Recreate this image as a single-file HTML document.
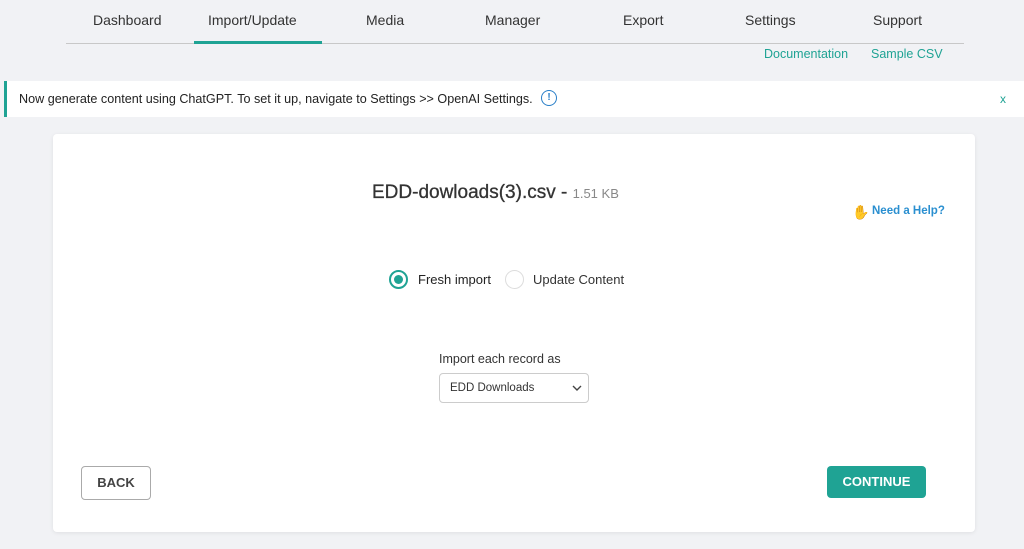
<!DOCTYPE html>
<html><head><meta charset="utf-8"><style>
*{margin:0;padding:0;box-sizing:border-box}
body{width:1024px;height:549px;background:#f1f2f5;font-family:"Liberation Sans",sans-serif;position:relative;overflow:hidden;color:#333}
.a{position:absolute;white-space:nowrap}
.nav{font-size:14px;color:#333;top:12px}
</style></head><body>
<div class="a nav" style="left:93px">Dashboard</div>
<div class="a nav" style="left:208px">Import/Update</div>
<div class="a nav" style="left:366px">Media</div>
<div class="a nav" style="left:485px">Manager</div>
<div class="a nav" style="left:623px">Export</div>
<div class="a nav" style="left:745px">Settings</div>
<div class="a nav" style="left:873px">Support</div>
<div class="a" style="left:66px;top:43px;width:898px;height:1px;background:#c8c8c8"></div>
<div class="a" style="left:194px;top:41px;width:128px;height:3px;background:#1fa394"></div>
<div class="a" style="left:764px;top:47px;font-size:12.5px;color:#1fa394">Documentation</div>
<div class="a" style="left:871px;top:47px;font-size:12.5px;color:#1fa394">Sample CSV</div>
<div class="a" style="left:4px;top:81px;width:1020px;height:36px;background:#fff;border-left:3px solid #1fa394"></div>
<div class="a" style="left:19px;top:92px;font-size:12.6px;color:#222">Now generate content using ChatGPT. To set it up, navigate to Settings &gt;&gt; OpenAI Settings.</div>
<div class="a" style="left:541px;top:90px;width:16px;height:16px;border:1.5px solid #2a7fc8;border-radius:50%;font-size:10px;color:#2a7fc8;text-align:center;line-height:13px;font-weight:bold">!</div>
<div class="a" style="left:1000px;top:92px;font-size:12px;color:#1fa394">x</div>
<div class="a" style="left:53px;top:134px;width:922px;height:398px;background:#fff;border-radius:4px;box-shadow:0 1px 4px rgba(0,0,0,.08)"></div>
<div class="a" style="left:372px;top:182px;font-size:19px;color:#333;-webkit-text-stroke:0.3px #333">EDD-dowloads(3).csv - <span style="font-size:13px;color:#888;-webkit-text-stroke:0">1.51 KB</span></div>
<div class="a" style="left:852px;top:204px;font-size:14px">✋</div>
<div class="a" style="left:872px;top:205px;font-size:11.5px;color:#2a8fd0;font-weight:bold">Need a Help?</div>
<div class="a" style="left:389px;top:270px;width:19px;height:19px;border:2px solid #1fa394;border-radius:50%"><div style="margin:3px;width:9px;height:9px;border-radius:50%;background:#1fa394"></div></div>
<div class="a" style="left:418px;top:272px;font-size:13px;color:#222">Fresh import</div>
<div class="a" style="left:505px;top:270px;width:19px;height:19px;border:1px solid #ddd;border-radius:50%"></div>
<div class="a" style="left:533px;top:272px;font-size:13px;color:#333">Update Content</div>
<div class="a" style="left:439px;top:352px;font-size:12.5px;color:#333">Import each record as</div>
<div class="a" style="left:439px;top:373px;width:150px;height:30px;border:1px solid #ccc;border-radius:4px"></div>
<div class="a" style="left:450px;top:382px;font-size:11.5px;color:#333">EDD Downloads</div>
<svg class="a" style="left:572px;top:384px" width="10" height="8"><path d="M1 2l4 4 4-4" fill="none" stroke="#444" stroke-width="1.4"/></svg>
<div class="a" style="left:81px;top:466px;width:70px;height:34px;border:1px solid #aaa;border-radius:4px;text-align:center;line-height:32px;font-size:13px;font-weight:bold;color:#444">BACK</div>
<div class="a" style="left:827px;top:466px;width:99px;height:32px;background:#1fa394;border-radius:4px;text-align:center;line-height:32px;font-size:13px;font-weight:bold;color:#fff">CONTINUE</div>
</body></html>
